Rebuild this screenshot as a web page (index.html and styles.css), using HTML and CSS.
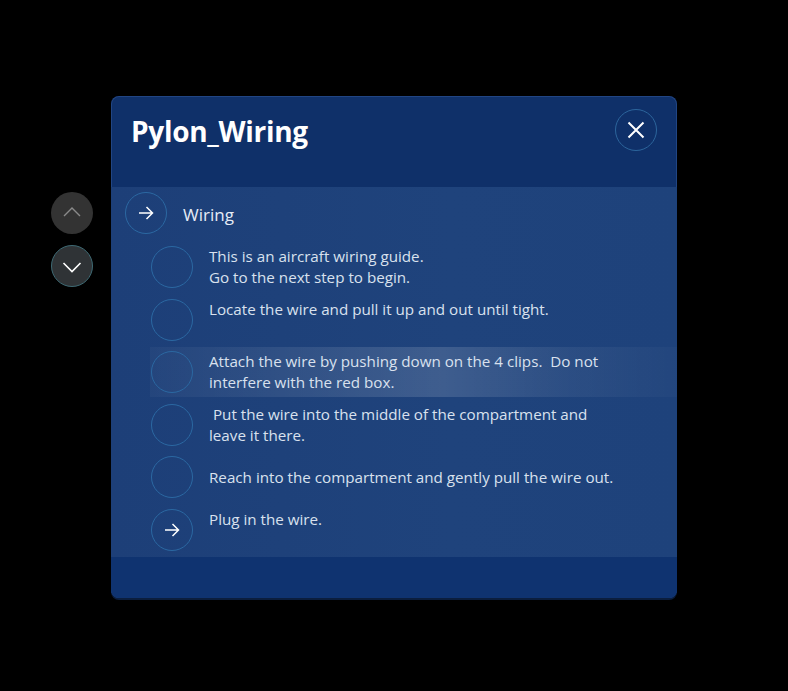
FILE: index.html
```html
<!DOCTYPE html>
<html>
<head>
<meta charset="utf-8">
<link rel="stylesheet" href="styles.css">
</head>
<body>
<div class="stage">
  <div class="nav">
    <button class="nav-btn up" aria-label="Up">
      <svg width="20" height="12" viewBox="0 0 20 12"><path d="M2 10 L10 2 L18 10" fill="none" stroke="#8a8a8a" stroke-width="1.4"/></svg>
    </button>
    <button class="nav-btn down" aria-label="Down">
      <svg width="20" height="12" viewBox="0 0 20 12"><path d="M1.5 2 L10 10.5 L18.5 2" fill="none" stroke="#ffffff" stroke-width="1.6"/></svg>
    </button>
  </div>
  <div class="panel">
    <div class="header">
      <h1 class="title">Pylon_Wiring</h1>
      <button class="close" aria-label="Close">
        <svg width="18" height="18" viewBox="0 0 18 18"><path d="M1.5 1.5 L16.5 16.5 M16.5 1.5 L1.5 16.5" stroke="#ffffff" stroke-width="2" fill="none"/></svg>
      </button>
    </div>
    <div class="list">
      <div class="section">
        <span class="ring">
          <svg width="16" height="14" viewBox="0 0 16 14"><path d="M1 7 H14.5 M8.5 1 L14.5 7 L8.5 13" fill="none" stroke="#ffffff" stroke-width="1.5"/></svg>
        </span>
        <span class="section-label">Wiring</span>
      </div>
      <div class="steps">
        <div class="step">
          <span class="ring"></span>
          <p class="step-text">This is an aircraft wiring guide.<br>Go to the next step to begin.</p>
        </div>
        <div class="step">
          <span class="ring"></span>
          <p class="step-text">Locate the wire and pull it up and out until tight.</p>
        </div>
        <div class="step active">
          <span class="ring"></span>
          <p class="step-text">Attach the wire by pushing down on the 4 clips.&nbsp; Do not<br>interfere with the red box.</p>
        </div>
        <div class="step">
          <span class="ring"></span>
          <p class="step-text">&nbsp;Put the wire into the middle of the compartment and<br>leave it there.</p>
        </div>
        <div class="step centered">
          <span class="ring"></span>
          <p class="step-text">Reach into the compartment and gently pull the wire out.</p>
        </div>
        <div class="step">
          <span class="ring">
            <svg width="16" height="14" viewBox="0 0 16 14"><path d="M1 7 H14.5 M8.5 1 L14.5 7 L8.5 13" fill="none" stroke="#ffffff" stroke-width="1.5"/></svg>
          </span>
          <p class="step-text">Plug in the wire.</p>
        </div>
      </div>
    </div>
    <div class="footer"></div>
  </div>
</div>
</body>
</html>
```

FILE: styles.css
```css
html, body {
  margin: 0;
  padding: 0;
  background: #000;
  width: 788px;
  height: 691px;
  overflow: hidden;
  font-family: "Open Sans", "Noto Sans", sans-serif;
}

.stage {
  display: flex;
  align-items: flex-start;
  padding: 96px 0 0 51px;
  gap: 18px;
}

.nav {
  display: flex;
  flex-direction: column;
  gap: 11px;
  margin-top: 96px;
}

.nav-btn {
  width: 42px;
  height: 42px;
  border-radius: 50%;
  border: none;
  padding: 0;
  display: flex;
  align-items: center;
  justify-content: center;
  background: #333333;
  box-sizing: border-box;
}

.nav-btn.up svg { margin-top: -2px; }

.nav-btn.down {
  background: #2f3336;
  border: 1.5px solid #3e6a74;
}

.nav-btn.down svg { margin-top: 2px; }

.panel {
  width: 566px;
  height: 502px;
  border-radius: 8px;
  background: #0f3069;
  box-shadow: inset 0 0 0 1px rgba(70, 110, 180, 0.35), 0 2px 0 #0b1e3e;
  display: flex;
  flex-direction: column;
  overflow: hidden;
}

.header {
  height: 91px;
  display: flex;
  justify-content: space-between;
  align-items: flex-start;
  padding: 0 20px;
  box-sizing: border-box;
}

.title {
  margin: 16px 0 0 0;
  color: #ffffff;
  font-size: 28px;
  font-weight: 700;
  letter-spacing: -0.3px;
  line-height: 38px;
}

.close {
  margin-top: 13px;
  width: 42px;
  height: 42px;
  border-radius: 50%;
  background: transparent;
  border: 1.5px solid #2c659c;
  padding: 0;
  display: flex;
  align-items: center;
  justify-content: center;
  box-sizing: border-box;
}

.list {
  height: 370px;
  background: linear-gradient(90deg, #1d3f78 0%, #1f437c 60%, #1e427b 100%);
  padding-top: 5px;
  box-sizing: border-box;
}

.section {
  display: flex;
  align-items: center;
  gap: 16px;
  padding-left: 14px;
  height: 42px;
}

.ring {
  width: 42px;
  height: 42px;
  border-radius: 50%;
  border: 1.5px solid #2b68a2;
  box-sizing: border-box;
  display: flex;
  align-items: center;
  justify-content: center;
  flex-shrink: 0;
}

.section-label {
  color: #e6ecf6;
  font-size: 17px;
  line-height: 24px;
  margin-top: 3px;
}

.steps {
  margin-top: 8px;
  display: flex;
  flex-direction: column;
  gap: 2.6px;
}

.step {
  display: flex;
  align-items: flex-start;
  gap: 16px;
  height: 50px;
  box-sizing: border-box;
  padding: 4px 0 4px 1px;
  margin-left: 39px;
}

.step.centered {
  align-items: center;
}

.step.active {
  background: linear-gradient(90deg, rgba(255,255,255,0.03) 0%, rgba(255,255,255,0.09) 30%, rgba(255,255,255,0.14) 55%, rgba(255,255,255,0.06) 80%, rgba(255,255,255,0.02) 100%);
}

.step-text {
  margin: 0;
  color: #d9e1ee;
  font-size: 15.2px;
  line-height: 21px;
  white-space: nowrap;
}

.footer {
  flex: 1;
  background: #0f3370;
}
```
